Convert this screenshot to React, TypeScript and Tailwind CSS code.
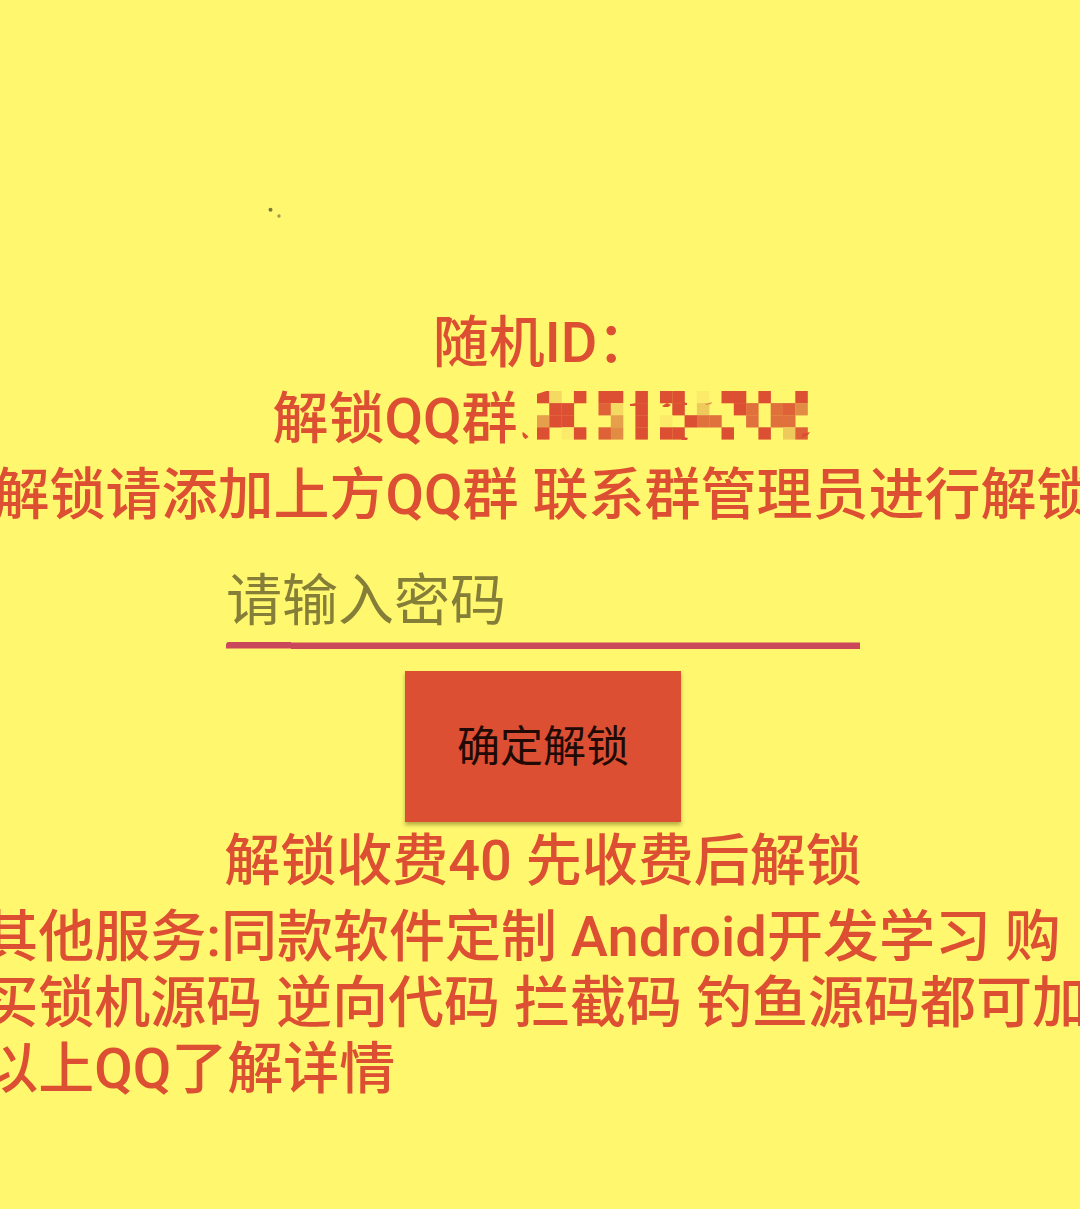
import React, { useState } from "react";

const TONES: Record<string, string> = {
  R: "#dc4f33",
  D: "#de6138",
  O: "#e0703c",
  E: "#e28b44",
  L: "#e6a04c",
  Q: "#eeca5c",
  P: "#f5da62",
  V: "#fceb69",
};

const MOSAIC = [
  "RP.R.RR.R.RR.V.RR.R..R",
  ".RR..DP.R..R.Q..RO.ODE",
  "LRR...L.R.V.ROO..O.OO.",
  "R.VR.DE.R.RR...R..R.QD",
];

function MaskedNumber() {
  return (
    <svg
      role="img"
      aria-label="已隐藏的群号"
      viewBox="0 0 296 66"
      className="h-[66px] w-[296px] shrink-0"
    >
      {MOSAIC.map((row, y) =>
        row
          .split("")
          .map((tone, x) =>
            tone === "." ? null : (
              <rect
                key={`${x}-${y}`}
                x={19 + x * 12.3}
                y={5 + y * 12.1}
                width={12.5}
                height={12.3}
                fill={TONES[tone]}
              />
            ),
          ),
      )}
      <path d="M19 4h12.3l-12.3 4z" fill="#fff76e" />
      <path d="M4.500 46c2 1 4 2.500 6 5l-3 2c-2-1-3.500-3.500-3-7z" fill="#dc4f33" />
      <path d="M112 18l7-1v3l-7 0zM163 19h6v-2l-4-1zM166 51l4 1-1 2-6 0z" fill="#dc4f33" />
      <path d="M144 20l5-3 4 2-3 2-4 0z" fill="#dc4f33" />
      <path d="M187 18l4-1 3-1-1 2-5 1z" fill="#e28b44" />
      <path d="M284 48l8-2-2 3-6 3z" fill="#dc4f33" />
    </svg>
  );
}

export default function App() {
  const [password, setPassword] = useState("");
  return (
    <main className="relative flex min-h-screen flex-col items-center overflow-hidden bg-[#fff76e] pt-[310px] pb-24 pl-1.5 font-['Roboto','Noto_Sans_CJK_SC',sans-serif] text-[56px] leading-[66px] font-medium text-[#dc4f33]">
      <svg
        aria-hidden="true"
        viewBox="0 0 16 12"
        className="absolute top-[206px] left-[267px] h-3 w-4"
      >
        <circle cx="3.500" cy="3.800" r="2" fill="#7d7840" />
        <circle cx="12" cy="10" r="1.700" fill="#a09a4b" />
      </svg>

      <div className="flex flex-col items-center gap-2.5 whitespace-nowrap">
        <p>随机ID：</p>
        <div className="flex items-center">
          <span>解锁QQ群</span>
          <MaskedNumber />
        </div>
        <p>解锁请添加上方QQ群 联系群管理员进行解锁</p>
      </div>

      <form
        className="mt-10 flex flex-col items-center"
        onSubmit={(event) => event.preventDefault()}
      >
        <input
          type="text"
          aria-label="请输入密码"
          placeholder="请输入密码"
          value={password}
          onChange={(event) => setPassword(event.target.value)}
          className="h-[66px] w-[634px] bg-transparent font-normal outline-none placeholder:text-[#847e39] placeholder:opacity-100"
        />
        <svg aria-hidden="true" viewBox="0 0 634 9" className="mt-2 h-[9px] w-[634px]">
          <path d="M2 -.5H65V.5H634V7H65V6.500H0V2z" fill="#ca485a" />
        </svg>
        <button
          type="submit"
          className="mt-5 h-[151px] w-[276px] bg-[#dc4f33] text-[43px] font-normal text-[#210a06] shadow-[0_3px_4px_rgba(70,65,0,0.4)]"
        >
          确定解锁
        </button>
      </form>

      <div className="mt-1.5 flex flex-col items-center gap-2.5 whitespace-nowrap">
        <p>解锁收费40 先收费后解锁</p>
        <p className="pr-4">
          其他服务:同款软件定制 Android开发学习 购
          <br />
          买锁机源码 逆向代码 拦截码 钓鱼源码都可加
          <br />
          以上QQ了解详情
        </p>
      </div>
    </main>
  );
}
